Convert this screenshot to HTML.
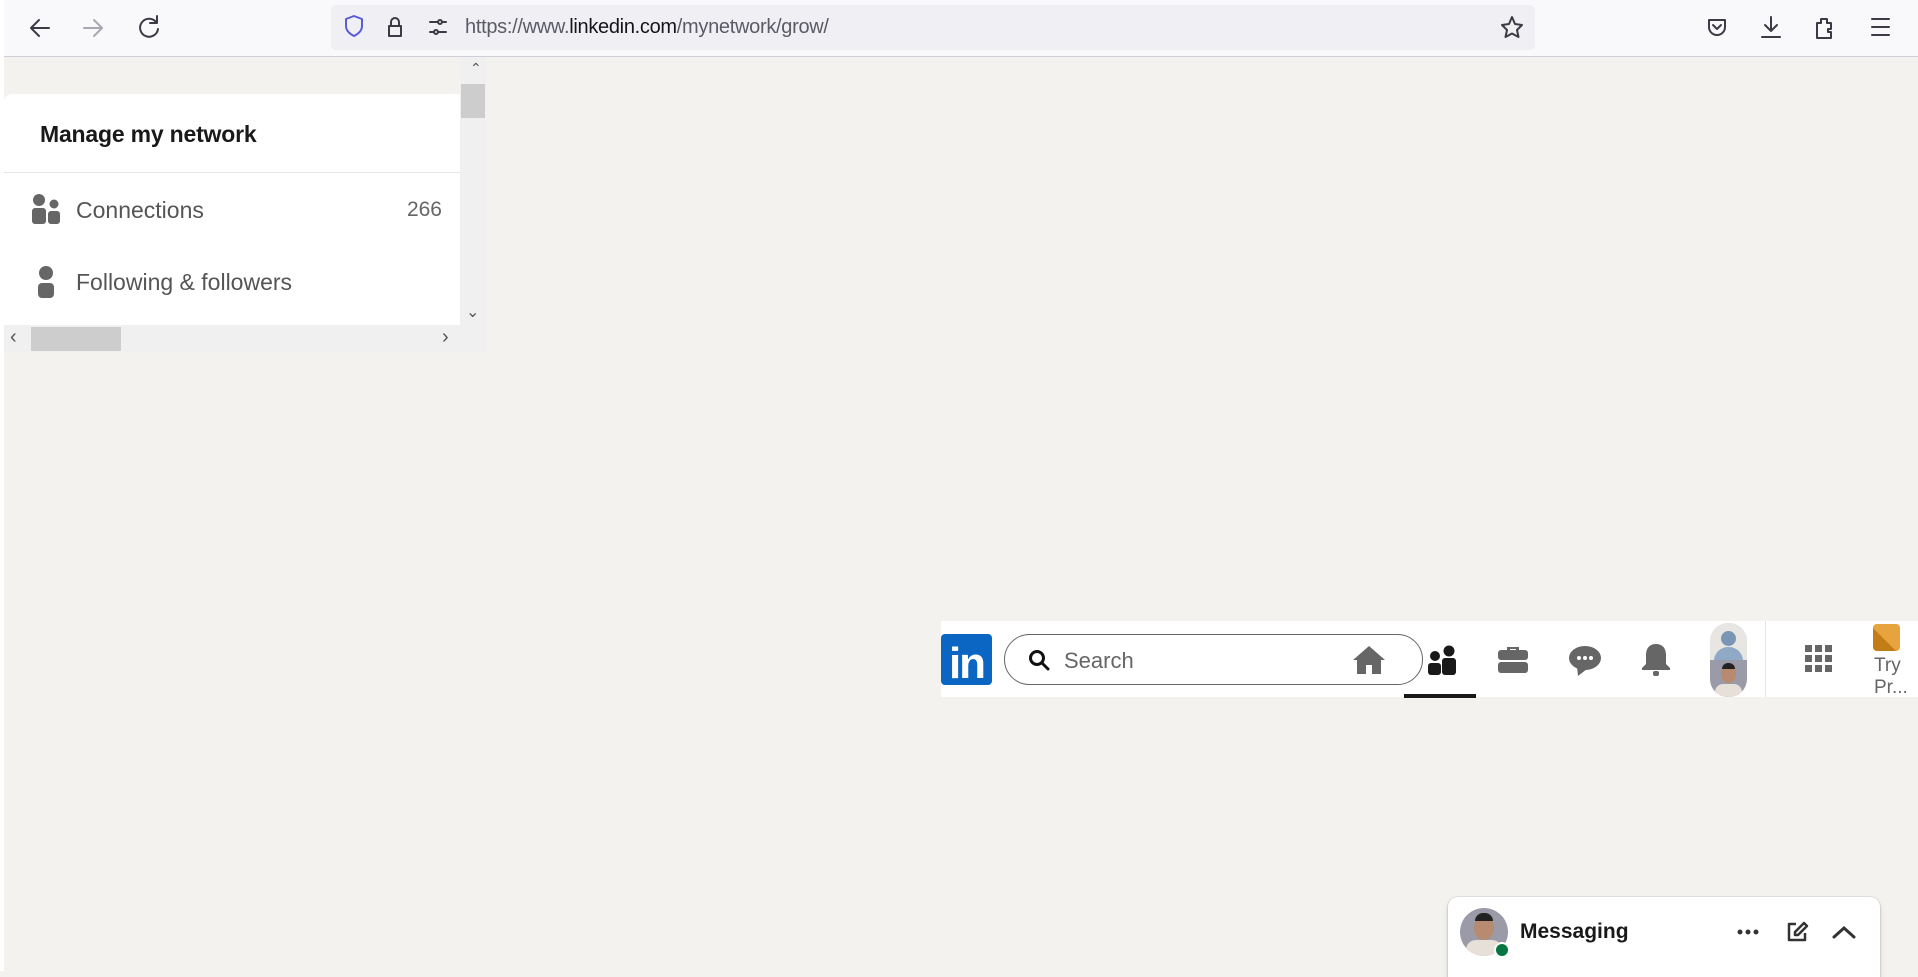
<!DOCTYPE html>
<html><head><meta charset="utf-8"><style>
*{margin:0;padding:0;box-sizing:border-box}
body{width:1918px;height:971px;overflow:hidden;background:#f3f2ef;font-family:"Liberation Sans",sans-serif;position:relative}
.a{position:absolute}
svg{position:absolute;overflow:visible}
</style></head><body>
<div class="a" style="left:0;top:0;width:1918px;height:57px;background:#f9f9fb;border-bottom:1px solid #cfcfd8"></div>
<div class="a" style="left:0;top:0;width:4px;height:971px;background:#fff"></div>
<div class="a" style="left:331px;top:5px;width:1204px;height:45px;background:#f0f0f4;border-radius:5px"></div>
<svg style="left:0;top:0" width="1918" height="57" fill="none" stroke="#3b3b45" stroke-width="2" stroke-linecap="round" stroke-linejoin="round">
<path d="M49 28H31M39 20l-8 8 8 8"/>
<path d="M84 28h18M94 20l8 8-8 8" stroke="#a8a8b0"/>
<path d="M156 22a9 9 0 1 0 2 7M157 16v7h-7"/>
<path d="M1512 17l3 7 7 1-5 5 1.5 7-6.5-3.5-6.5 3.5 1.5-7-5-5 7-1z"/>
<path d="M1709 20h16v7a8 8 0 0 1-16 0zM1713 25l4 4 4-4"/>
<path d="M1771 17v14M1765 25l6 6 6-6M1762 37h18"/>
<path d="M1817 23h4v-4h6v4h4v6h-3v3h3v6h-14z"/>
<path d="M1872 19h17M1872 27h17M1872 35h17"/>
</svg>
<svg style="left:0;top:0" width="1918" height="57" fill="none" stroke-width="2" stroke-linecap="round" stroke-linejoin="round">
<path d="M354 16l8 3v7c0 5-4 8-8 10-4-2-8-5-8-10v-7z" stroke="#5b5bd6"/>
<path d="M389 26h12v10h-12zM391 26v-4a4 4 0 0 1 8 0v4" stroke="#3b3b45"/>
<path d="M430 22h8M442 22h4M430 32h4M438 32h8" stroke="#3b3b45"/><circle cx="440" cy="22" r="2" stroke="#3b3b45"/><circle cx="436" cy="32" r="2" stroke="#3b3b45"/>
</svg>
<div class="a" style="left:465px;top:16px;font-size:20px;color:#5b5b66;letter-spacing:-0.3px">https://www.<span style="color:#15141a">linkedin.com</span>/mynetwork/grow/</div>

<div class="a" style="left:4px;top:94px;width:456px;height:231px;background:#fff;border-radius:8px 0 0 0"></div>
<div class="a" style="left:40px;top:121px;font-size:23px;font-weight:600;color:#191919;letter-spacing:-0.2px">Manage my network</div>
<div class="a" style="left:4px;top:172px;width:456px;height:1px;background:#e6e6e6"></div>
<svg style="left:31px;top:194px" width="30" height="30" fill="#666"><circle cx="8" cy="6" r="6"/><rect x="1" y="14" width="14" height="16" rx="3"/><circle cx="23" cy="10" r="4.5"/><rect x="17" y="17" width="12" height="13" rx="3"/></svg>
<div class="a" style="left:76px;top:197px;font-size:23px;color:#555">Connections</div>
<div class="a" style="left:400px;top:198px;width:42px;text-align:right;font-size:21px;color:#666">266</div>
<svg style="left:37px;top:266px" width="20" height="32" fill="#666"><circle cx="9" cy="7" r="7"/><rect x="1" y="17" width="16" height="15" rx="4"/></svg>
<div class="a" style="left:76px;top:269px;font-size:23px;color:#555">Following &amp; followers</div>
<div class="a" style="left:460px;top:57px;width:26px;height:295px;background:#f0f0f0"></div>
<div class="a" style="left:461px;top:84px;width:24px;height:34px;background:#cdcdcd"></div>
<div class="a" style="left:470px;top:60px;font-size:14px;color:#555">&#8963;</div>
<div class="a" style="left:466px;top:302px;font-size:16px;color:#555">&#8964;</div>
<div class="a" style="left:4px;top:325px;width:456px;height:27px;background:#f0f0f0"></div>
<div class="a" style="left:31px;top:327px;width:90px;height:24px;background:#cdcdcd"></div>
<div class="a" style="left:10px;top:326px;font-size:20px;color:#555">&#8249;</div>
<div class="a" style="left:442px;top:326px;font-size:20px;color:#555">&#8250;</div>

<div class="a" style="left:941px;top:621px;width:977px;height:76px;background:#fff"></div>
<div class="a" style="left:941px;top:634px;width:51px;height:51px;background:#0a66c2;border-radius:4px;color:#fff;font-weight:700;font-size:44px;line-height:51px;text-align:center;letter-spacing:-2px;padding-top:4px">in</div>
<div class="a" style="left:1004px;top:634px;width:419px;height:51px;border:1px solid #666;border-radius:26px;background:#fff"></div>
<svg style="left:1028px;top:649px" width="22" height="22" fill="none" stroke="#111" stroke-width="3"><circle cx="9" cy="9" r="6.5"/><path d="M14 14l6 6" stroke-linecap="round"/></svg>
<div class="a" style="left:1064px;top:648px;font-size:22px;color:#666">Search</div>
<svg style="left:1352px;top:645px" width="34" height="30" fill="#666"><path d="M17 1L1 15h4v14h9v-9h6v9h9V15h4z"/></svg>
<svg style="left:1427px;top:645px" width="30" height="30" fill="#191919"><circle cx="22" cy="6" r="5.5"/><rect x="15" y="13" width="14" height="17" rx="3"/><circle cx="8" cy="11" r="5"/><rect x="1" y="18" width="13" height="12" rx="3"/></svg>
<div class="a" style="left:1404px;top:694px;width:72px;height:4px;background:#191919"></div>
<svg style="left:1497px;top:644px" width="32" height="30" fill="#666"><path d="M10 6V3h12v3h-3V5h-6v1z"/><rect x="1" y="6" width="30" height="10" rx="3"/><rect x="1" y="18" width="30" height="11" rx="3"/></svg>
<svg style="left:1568px;top:645px" width="34" height="32" fill="#666"><ellipse cx="17" cy="13" rx="16" ry="12"/><path d="M9 22l1 9 9-7z"/><circle cx="11" cy="13" r="2" fill="#fff"/><circle cx="17" cy="13" r="2" fill="#fff"/><circle cx="23" cy="13" r="2" fill="#fff"/></svg>
<svg style="left:1641px;top:643px" width="30" height="34" fill="#666"><path d="M15 1c-7 0-10 5-10 11v9l-4 4v2h28v-2l-4-4v-9C25 6 22 1 15 1z"/><rect x="12" y="28" width="6" height="5" rx="2"/></svg>
<div class="a" style="left:1710px;top:623px;width:37px;height:74px;border-radius:18px;overflow:hidden;background:#ddd"><div style="height:37px;background:#e8e6e2;position:relative"><div style="position:absolute;left:11px;top:8px;width:15px;height:15px;border-radius:50%;background:#7a96b4"></div><div style="position:absolute;left:4px;top:24px;width:29px;height:14px;border-radius:14px 14px 0 0;background:#8fa9c6"></div></div><div style="height:37px;background:#9a9aa8;position:relative"><div style="position:absolute;left:11px;top:5px;width:15px;height:18px;border-radius:50%;background:#b88a70"></div><div style="position:absolute;left:12px;top:3px;width:13px;height:6px;background:#222;border-radius:6px 6px 0 0"></div><div style="position:absolute;left:5px;top:24px;width:27px;height:13px;background:#e6e0d8;border-radius:8px 8px 0 0"></div></div></div>
<div class="a" style="left:1765px;top:621px;width:1px;height:76px;background:#e6e6e6"></div>
<svg style="left:1805px;top:645px" width="28" height="28" fill="#666"><rect x="0" y="0" width="7" height="7"/><rect x="10" y="0" width="7" height="7"/><rect x="20" y="0" width="7" height="7"/><rect x="0" y="10" width="7" height="7"/><rect x="10" y="10" width="7" height="7"/><rect x="20" y="10" width="7" height="7"/><rect x="0" y="20" width="7" height="7"/><rect x="10" y="20" width="7" height="7"/><rect x="20" y="20" width="7" height="7"/></svg>
<svg style="left:1873px;top:624px" width="27" height="27"><rect width="27" height="27" rx="4" fill="#e7a33e"/><path d="M0 4l23 23H4a4 4 0 0 1-4-4z" fill="#c37d16"/></svg>
<div class="a" style="left:1874px;top:655px;font-size:19px;color:#666;line-height:22px">Try<br>Pr...</div>

<div class="a" style="left:1448px;top:897px;width:432px;height:80px;background:#fff;border-radius:10px 10px 0 0;box-shadow:0 0 0 1px rgba(0,0,0,.08),0 4px 6px rgba(0,0,0,.15)"></div>
<div class="a" style="left:1460px;top:908px;width:48px;height:48px;border-radius:50%;background:#9a9aa8;overflow:hidden"><div style="position:absolute;left:14px;top:8px;width:20px;height:24px;border-radius:50%;background:#b88a70"></div><div style="position:absolute;left:15px;top:5px;width:18px;height:8px;background:#222;border-radius:8px 8px 0 0"></div><div style="position:absolute;left:6px;top:32px;width:36px;height:18px;background:#e6e0d8;border-radius:10px 10px 0 0"></div></div>
<div class="a" style="left:1494px;top:942px;width:16px;height:16px;border-radius:50%;background:#057642;border:2px solid #fff"></div>
<div class="a" style="left:1520px;top:920px;font-size:21px;font-weight:600;color:#191919">Messaging</div>
<svg style="left:1737px;top:929px" width="22" height="6" fill="#333"><circle cx="3" cy="3" r="2.5"/><circle cx="11" cy="3" r="2.5"/><circle cx="19" cy="3" r="2.5"/></svg>
<svg style="left:1786px;top:921px" width="22" height="22" fill="none" stroke="#333" stroke-width="2.5" stroke-linejoin="round"><path d="M10 3H3v16h16v-7"/><path d="M18 2l3 3-9 9H9v-3z"/></svg>
<svg style="left:1832px;top:925px" width="24" height="14" fill="none" stroke="#333" stroke-width="3" stroke-linecap="round"><path d="M2 12L12 3l10 9"/></svg>
</body></html>
